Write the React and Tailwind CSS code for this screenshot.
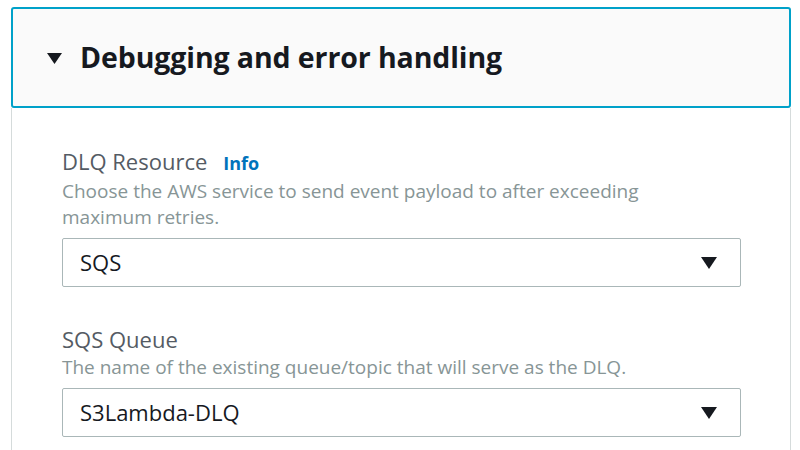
export default function App() {
  return (
    <div className="w-[800px] h-[450px] overflow-hidden bg-white font-['Open_Sans',sans-serif]">
      <div className="ml-[11px] mr-[9px] mt-[7px]">
        {/* Section header */}
        <div className="h-[101px] flex items-center bg-[#fafafa] border-2 border-[#00a1c9] rounded-[3px] pl-[34px]">
          <svg width="15" height="12" viewBox="0 0 15 12" className="mr-[18px] mt-[2px]">
            <path d="M0 0 H15 L7.5 11 Z" fill="#16191f" />
          </svg>
          <h2 className="text-[28.5px] font-bold text-[#16191f] tracking-[-0.1px]">Debugging and error handling</h2>
        </div>

        {/* Section body */}
        <div className="border-x border-[#d5dbdb] pl-[50px] pr-[49px] pt-[38px] h-[400px]">
          <div className="mb-[37px]">
            <div className="flex items-baseline gap-[16px] leading-[30px]">
              <span className="text-[22px] text-[#545b64]">DLQ Resource</span>
              <a className="text-[18px] font-bold text-[#0073bb]">Info</a>
            </div>
            <p className="text-[19px] leading-[26px] text-[#879596] max-w-[655px]">
              Choose the AWS service to send event payload to after exceeding maximum retries.
            </p>
            <Select value="SQS" />
          </div>

          <div>
            <div className="text-[22px] leading-[30px] text-[#545b64]">SQS Queue</div>
            <p className="text-[19px] leading-[26px] text-[#879596]">
              The name of the existing queue/topic that will serve as the DLQ.
            </p>
            <Select value="S3Lambda-DLQ" />
          </div>
        </div>
      </div>
    </div>
  );
}

function Select({ value }) {
  return (
    <div className="mt-[8px] h-[49px] flex items-center justify-between border border-[#aab7b8] rounded-[2px] pl-[17px] pr-[23px]">
      <span className="text-[22px] text-[#16191f]">{value}</span>
      <svg width="16" height="12" viewBox="0 0 16 12">
        <path d="M0 0 H16 L8 12 Z" fill="#16191f" />
      </svg>
    </div>
  );
}
